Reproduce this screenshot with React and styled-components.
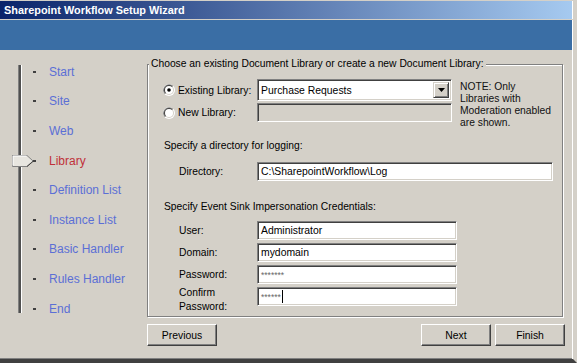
import React from 'react';
import styled, { createGlobalStyle } from 'styled-components';

const GlobalStyle = createGlobalStyle`
  html, body {
    margin: 0;
    padding: 0;
    background: #d4d0c8;
  }
  * {
    box-sizing: border-box;
  }
`;

const Window = styled.div`
  width: 577px;
  height: 363px;
  display: flex;
  flex-direction: column;
  background: #d4d0c8;
  border-right: 4px solid #d4d0c8;
  border-bottom: 4px solid #404040;
  font-family: 'Liberation Sans', Arial, sans-serif;
  font-size: 10.3px;
  color: #000;
  overflow: hidden;
`;

const TitleBar = styled.div`
  height: 18px;
  margin-top: 1px;
  padding-left: 4px;
  display: flex;
  align-items: center;
  background: linear-gradient(to right, #0a246a, #a6caf0);
  color: #fff;
  font-weight: bold;
  font-size: 10.9px;
  box-shadow: inset -1px 0 #fff;
`;

const Banner = styled.div`
  height: 30px;
  margin-top: 1px;
  background: #3a6ea5;
  box-shadow: inset -1px 0 #fff;
  flex-shrink: 0;
`;

const Body = styled.div`
  flex: 1;
  display: flex;
  padding-top: 7px;
  box-shadow: inset -1px 0 #fff, inset 0 -1px #808080;
`;

/* ---------- left navigation ---------- */

const Nav = styled.div`
  position: relative;
  width: 147px;
  flex-shrink: 0;
  &::before {
    content: '';
    position: absolute;
    left: 18px;
    top: 8px;
    width: 2px;
    height: 248px;
    background: #505050;
    border-left: 1px solid #808080;
    box-shadow: 1px 0 #fff;
  }
`;

const NavItem = styled.div`
  position: relative;
  height: 29.6px;
  display: flex;
  align-items: center;
  font-size: 12px;
  color: ${(p) => (p.$active ? '#c0303a' : '#5b6fd6')};
`;

const Tick = styled.span`
  width: 3px;
  height: 2px;
  margin-left: 33px;
  margin-right: 13px;
  background: #404040;
`;

const Thumb = styled.svg`
  position: absolute;
  left: 12px;
  top: 50%;
  margin-top: -6px;
`;

/* ---------- main area ---------- */

const Main = styled.div`
  width: 418px;
  display: flex;
  flex-direction: column;
`;

const Group = styled.fieldset`
  margin: 0;
  padding: 0 0 10px 15px;
  height: 260px;
  width: 416px;
  border: 1px solid #808080;
  box-shadow: inset 1px 1px #fff, 1px 1px #fff;
  display: flex;
  flex-direction: column;
`;

const Legend = styled.legend`
  margin-left: -14px;
  padding: 0 2px;
  line-height: 14px;
  background: #d4d0c8;
`;

const LibrarySection = styled.div`
  margin-top: 8px;
  display: flex;
  align-items: flex-start;
`;

const LibraryRows = styled.div`
  display: flex;
  flex-direction: column;
  gap: 2px;
`;

const Row = styled.div`
  display: flex;
  align-items: ${(p) => (p.$top ? 'flex-start' : 'center')};
  margin-top: ${(p) => p.$mt || 0}px;
`;

const RadioLabel = styled.label`
  width: 94px;
  display: flex;
  align-items: center;
  gap: 3px;
`;

const FieldLabel = styled.div`
  width: 94px;
  padding-left: 16px;
  line-height: 14px;
  margin-top: ${(p) => (p.$multi ? '-1px' : 0)};
`;

const sunken = `
  border-top: 1px solid #808080;
  border-left: 1px solid #808080;
  border-bottom: 1px solid #fff;
  border-right: 1px solid #fff;
  box-shadow: inset 1px 1px #404040, inset -1px -1px #d4d0c8;
`;

const TextBox = styled.div`
  ${sunken}
  width: ${(p) => p.$width}px;
  height: ${(p) => p.$height || 19}px;
  padding: 0 3px;
  display: flex;
  align-items: center;
  background: ${(p) => (p.$disabled ? '#d4d0c8' : '#fff')};
  font-size: ${(p) => (p.$secret ? '8.5px' : '10.4px')};
  color: ${(p) => (p.$secret ? '#666' : '#000')};
  white-space: nowrap;
`;

const Select = styled(TextBox)`
  justify-content: space-between;
  padding-right: 2px;
`;

const DropButton = styled.div`
  width: 16px;
  height: 16px;
  display: flex;
  align-items: center;
  justify-content: center;
  background: #d4d0c8;
  border-top: 1px solid #d4d0c8;
  border-left: 1px solid #d4d0c8;
  border-bottom: 1px solid #404040;
  border-right: 1px solid #404040;
  box-shadow: inset 1px 1px #fff, inset -1px -1px #808080;
`;

const Caret = styled.span`
  display: inline-block;
  width: 1px;
  height: 13px;
  margin-left: 1px;
  background: #000;
`;

const Note = styled.div`
  margin-left: 8px;
  margin-top: 2px;
  line-height: 12px;
  color: #111;
`;

const SectionTitle = styled.div`
  margin-top: ${(p) => p.$mt}px;
  padding-left: 1px;
  line-height: 13px;
`;

const Fields = styled.div`
  margin-top: 8px;
  display: flex;
  flex-direction: column;
  gap: 3px;
`;

const ButtonRow = styled.div`
  margin-top: 7px;
  display: flex;
  gap: 4px;
`;

const Spacer = styled.div`
  flex: 1;
`;

const Button = styled.button`
  width: 70px;
  height: 22px;
  padding: 0;
  font-family: inherit;
  font-size: 10.4px;
  color: #000;
  background: #d4d0c8;
  border-top: 1px solid #fff;
  border-left: 1px solid #fff;
  border-bottom: 1px solid #404040;
  border-right: 1px solid #404040;
  box-shadow: inset -1px -1px #808080;
`;

const Radio = ({ checked }) => (
  <svg width="12" height="12" viewBox="0 0 12 12">
    <circle cx="6" cy="6" r="6" fill="#fff" />
    <path d="M10.24 1.76 A6 6 0 0 0 1.76 10.24 Z" fill="#808080" />
    <circle cx="6" cy="6" r="5" fill="#d4d0c8" />
    <path d="M9.54 2.46 A5 5 0 0 0 2.46 9.54 Z" fill="#404040" />
    <circle cx="6" cy="6" r="4" fill="#fff" />
    {checked && <circle cx="6" cy="6" r="1.8" fill="#000" />}
  </svg>
);

const steps = [
  'Start',
  'Site',
  'Web',
  'Library',
  'Definition List',
  'Instance List',
  'Basic Handler',
  'Rules Handler',
  'End',
];

const App = () => (
  <>
    <GlobalStyle />
    <Window>
      <TitleBar>Sharepoint Workflow Setup Wizard</TitleBar>
      <Banner />
      <Body>
        <Nav>
          {steps.map((s) => (
            <NavItem key={s} $active={s === 'Library'}>
              {s === 'Library' && (
                <Thumb width="22" height="12" viewBox="0 0 22 12">
                  <path d="M0.5 0.5 H15 L21 6 L15 11.5 H0.5 Z" fill="#e8e6e0" stroke="#808080" />
                  <path d="M1 10.5 V1 H14.6" fill="none" stroke="#fff" />
                  <path d="M15 11.5 L21.5 6" stroke="#404040" />
                </Thumb>
              )}
              <Tick />
              {s}
            </NavItem>
          ))}
        </Nav>
        <Main>
          <Group>
            <Legend>Choose an existing Document Library or create a new Document Library:</Legend>
            <LibrarySection>
              <LibraryRows>
                <Row>
                  <RadioLabel>
                    <Radio checked />
                    Existing Library:
                  </RadioLabel>
                  <Select $width={195} $height={22}>
                    Purchase Requests
                    <DropButton>
                      <svg width="7" height="4" viewBox="0 0 7 4">
                        <path d="M0 0 H7 L3.5 4 Z" fill="#000" />
                      </svg>
                    </DropButton>
                  </Select>
                </Row>
                <Row>
                  <RadioLabel>
                    <Radio />
                    New Library:
                  </RadioLabel>
                  <TextBox $width={195} $disabled />
                </Row>
              </LibraryRows>
              <Note>
                NOTE: Only
                <br />
                Libraries with
                <br />
                Moderation enabled
                <br />
                are shown.
              </Note>
            </LibrarySection>

            <SectionTitle $mt={10}>Specify a directory for logging:</SectionTitle>
            <Row $mt={10}>
              <FieldLabel>Directory:</FieldLabel>
              <TextBox $width={296}>C:\SharepointWorkflow\Log</TextBox>
            </Row>

            <SectionTitle $mt={19}>Specify Event Sink Impersonation Credentials:</SectionTitle>
            <Fields>
              <Row>
                <FieldLabel>User:</FieldLabel>
                <TextBox $width={200}>Administrator</TextBox>
              </Row>
              <Row>
                <FieldLabel>Domain:</FieldLabel>
                <TextBox $width={200}>mydomain</TextBox>
              </Row>
              <Row>
                <FieldLabel>Password:</FieldLabel>
                <TextBox $width={200} $secret>
                  *******
                </TextBox>
              </Row>
              <Row $top>
                <FieldLabel $multi>
                  Confirm
                  <br />
                  Password:
                </FieldLabel>
                <TextBox $width={200} $secret>
                  ******
                  <Caret />
                </TextBox>
              </Row>
            </Fields>
          </Group>
          <ButtonRow>
            <Button>Previous</Button>
            <Spacer />
            <Button>Next</Button>
            <Button>Finish</Button>
          </ButtonRow>
        </Main>
      </Body>
    </Window>
  </>
);

export default App;
